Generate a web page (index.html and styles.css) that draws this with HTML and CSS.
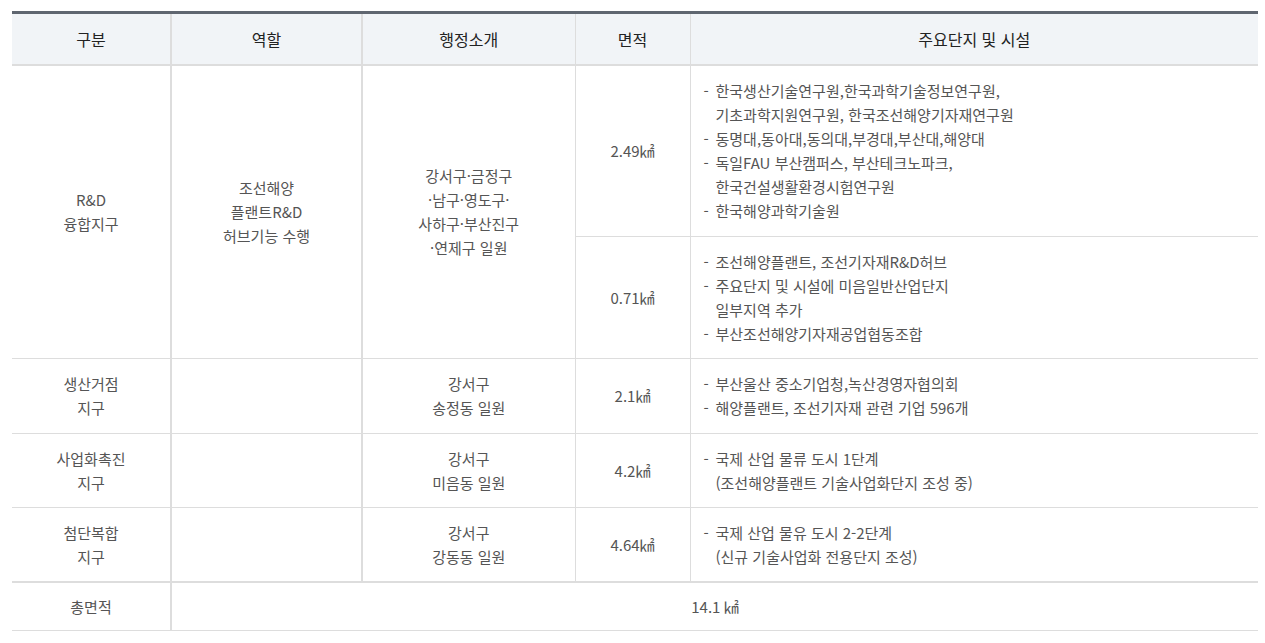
FILE: index.html
```html
<!DOCTYPE html>
<html lang="ko">
<head>
<meta charset="utf-8">
<link rel="stylesheet" href="styles.css">
</head>
<body>
<div class="wrap">
<table class="tbl">
  <colgroup>
    <col class="w1"><col class="w2"><col class="w3"><col class="w4"><col>
  </colgroup>
  <thead>
    <tr>
      <th class="c1">구분</th>
      <th class="c2">역할</th>
      <th>행정소개</th>
      <th>면적</th>
      <th>주요단지 및 시설</th>
    </tr>
  </thead>
  <tbody>
    <tr class="tall">
      <td class="c1" rowspan="2">R&amp;D<br>융합지구</td>
      <td class="c2" rowspan="2">조선해양<br>플랜트R&amp;D<br>허브기능 수행</td>
      <td rowspan="2">강서구·금정구<br>·남구·영도구·<br>사하구·부산진구<br>·연제구 일원</td>
      <td>2.49㎢</td>
      <td class="list">
        <div class="item"><span class="dash">-</span>한국생산기술연구원,한국과학기술정보연구원,<br>기초과학지원연구원, 한국조선해양기자재연구원</div>
        <div class="item"><span class="dash">-</span>동명대,동아대,동의대,부경대,부산대,해양대</div>
        <div class="item"><span class="dash">-</span>독일FAU 부산캠퍼스, 부산테크노파크,<br>한국건설생활환경시험연구원</div>
        <div class="item"><span class="dash">-</span>한국해양과학기술원</div>
      </td>
    </tr>
    <tr>
      <td>0.71㎢</td>
      <td class="list">
        <div class="item"><span class="dash">-</span>조선해양플랜트, 조선기자재R&amp;D허브</div>
        <div class="item"><span class="dash">-</span>주요단지 및 시설에 미음일반산업단지<br>일부지역 추가</div>
        <div class="item"><span class="dash">-</span>부산조선해양기자재공업협동조합</div>
      </td>
    </tr>
    <tr class="tall">
      <td class="c1">생산거점<br>지구</td>
      <td class="c2"></td>
      <td>강서구<br>송정동 일원</td>
      <td>2.1㎢</td>
      <td class="list">
        <div class="item"><span class="dash">-</span>부산울산 중소기업청,녹산경영자협의회</div>
        <div class="item"><span class="dash">-</span>해양플랜트, 조선기자재 관련 기업 596개</div>
      </td>
    </tr>
    <tr>
      <td class="c1">사업화촉진<br>지구</td>
      <td class="c2"></td>
      <td>강서구<br>미음동 일원</td>
      <td>4.2㎢</td>
      <td class="list">
        <div class="item"><span class="dash">-</span>국제 산업 물류 도시 1단계<br>(조선해양플랜트 기술사업화단지 조성 중)</div>
      </td>
    </tr>
    <tr>
      <td class="c1">첨단복합<br>지구</td>
      <td class="c2"></td>
      <td>강서구<br>강동동 일원</td>
      <td>4.64㎢</td>
      <td class="list">
        <div class="item"><span class="dash">-</span>국제 산업 물유 도시 2-2단계<br>(신규 기술사업화 전용단지 조성)</div>
      </td>
    </tr>
  </tbody>
  <tfoot>
    <tr>
      <td class="c1">총면적</td>
      <td colspan="4" class="total">14.1 ㎢</td>
    </tr>
  </tfoot>
</table>
</div>
</body>
</html>
```

FILE: styles.css
```css
html, body {
  margin: 0;
  padding: 0;
  background: #fff;
}
body {
  font-family: "Noto Sans CJK KR", "Noto Sans", sans-serif;
  font-size: 15px;
  color: #555;
}
.wrap {
  padding: 11px 7px 0 12px;
}
.tbl {
  width: 100%;
  border-collapse: collapse;
  table-layout: fixed;
  border-top: 3px solid #5f6670;
  border-bottom: 1px solid #aaa;
}
.w1 { width: 159px; }
.w2 { width: 191px; }
.w3 { width: 213px; }
.w4 { width: 115px; }

th {
  background: #f1f4f7;
  color: #222;
  font-weight: normal;
  font-size: 16px;
  height: 50px;
  padding: 0 10px;
  line-height: 24px;
  border-left: 1px solid #ddd;
  border-right: 1px solid #ddd;
  border-bottom: 2px solid #ddd;
  text-align: center;
  vertical-align: middle;
}
th:first-child, td:first-child { border-left: 0; }
th:last-child, td:last-child { border-right: 0; }

td {
  padding: 13px 10px 12px;
  line-height: 24px;
  text-align: center;
  vertical-align: middle;
  border: 1px solid #ddd;
}
tr.tall > td { padding-bottom: 13px; }
.c1, .c2 { border-right: 2px solid #ddd; }
th.c1, th.c2 { border-right-width: 2px; }

td.list {
  text-align: left;
  padding-left: 13px;
}
.item {
  padding-left: 12px;
  text-indent: -12px;
}
.dash {
  display: inline-block;
  width: 12px;
  text-indent: 0;
}
tfoot td {
  border-top: 2px solid #ddd;
  padding: 12px 10px 11px;
}
tfoot td.total {
  text-align: center;
}
```
